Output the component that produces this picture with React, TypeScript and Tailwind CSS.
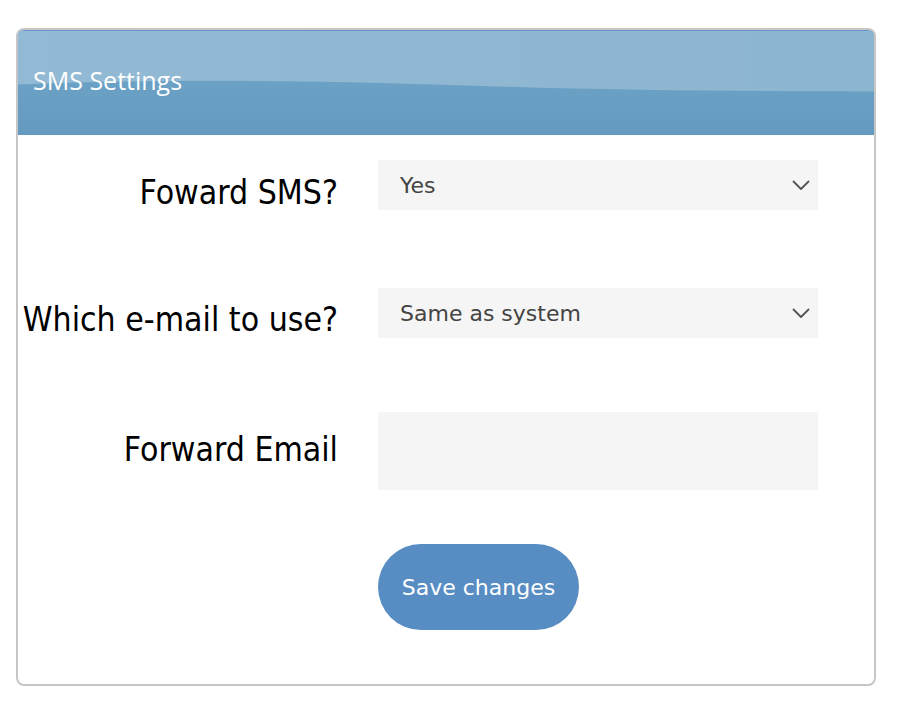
const labelFont = { fontFamily: '"DejaVu Sans Condensed", "DejaVu Sans", sans-serif' };
const fieldFont = { fontFamily: '"DejaVu Sans", Verdana, sans-serif' };

function Header() {
  return (
    <div className="relative h-[105px] rounded-t-[6px] border-t border-[#6a95cf] bg-[#8fb7d1] overflow-hidden">
      {/* glossy wave */}
      <svg className="absolute inset-0 w-full h-full" viewBox="0 0 856 105" preserveAspectRatio="none">
        <defs>
          <linearGradient id="top" x1="0" x2="1" y1="0" y2="0">
            <stop offset="0" stopColor="#93bad4" />
            <stop offset="1" stopColor="#8cb5cf" />
          </linearGradient>
          <linearGradient id="bot" x1="0" x2="0" y1="0" y2="1">
            <stop offset="0" stopColor="#6ba1c5" />
            <stop offset="1" stopColor="#649abf" />
          </linearGradient>
        </defs>
        <rect x="0" y="0" width="856" height="105" fill="url(#top)" />
        <path d="M0 54 C 150 48, 300 50, 450 55 S 750 61, 856 61 L 856 105 L 0 105 Z" fill="url(#bot)" />
      </svg>
      <div
        className="relative pl-[15px] pt-[37px] text-[25px] text-white leading-none"
        style={{ fontFamily: '"Open Sans", sans-serif' }}
      >
        SMS Settings
      </div>
    </div>
  );
}

function Chevron() {
  return (
    <svg width="18" height="11" viewBox="0 0 18 11" fill="none">
      <path d="M1.5 1.5 L9 9 L16.5 1.5" stroke="#555555" strokeWidth="1.8" strokeLinecap="round" strokeLinejoin="round" />
    </svg>
  );
}

function SelectBox({ value }: { value: string }) {
  return (
    <div
      className="flex items-center justify-between h-[50px] w-[440px] bg-[#f5f5f5] pl-[22px] pr-[8px] text-[22px] text-[#444444]"
      style={fieldFont}
    >
      <span className="mt-[1px]">{value}</span>
      <Chevron />
    </div>
  );
}

export default function App() {
  return (
    <div className="min-h-[702px] bg-white pt-[28px] px-[16px]">
      <div className="w-[860px] h-[658px] border-2 border-[#c6c6c6] rounded-[8px] bg-white flex flex-col">
        <Header />
        <div className="flex flex-col pt-[25px]">
          <div className="flex items-start gap-[40px]">
            <div className="w-[320px] text-right text-[33.5px] text-black pt-[16px] leading-none" style={labelFont}>
              Foward SMS?
            </div>
            <SelectBox value="Yes" />
          </div>
          <div className="flex items-start gap-[40px] mt-[78px]">
            <div className="w-[320px] text-right text-[33.5px] text-black pt-[15px] leading-none" style={labelFont}>
              Which e-mail to use?
            </div>
            <SelectBox value="Same as system" />
          </div>
          <div className="flex items-start gap-[40px] mt-[74px]">
            <div className="w-[320px] text-right text-[33.5px] text-black pt-[21px] leading-none" style={labelFont}>
              Forward Email
            </div>
            <input className="h-[78px] w-[440px] bg-[#f5f5f5] outline-none px-[22px] text-[22px]" style={fieldFont} />
          </div>
          <div className="flex gap-[40px] mt-[54px]">
            <div className="w-[320px]" />
            <button className="h-[86px] w-[201px] rounded-full bg-[#588dc3] text-white text-[22px]" style={fieldFont}>
              Save changes
            </button>
          </div>
        </div>
      </div>
    </div>
  );
}
